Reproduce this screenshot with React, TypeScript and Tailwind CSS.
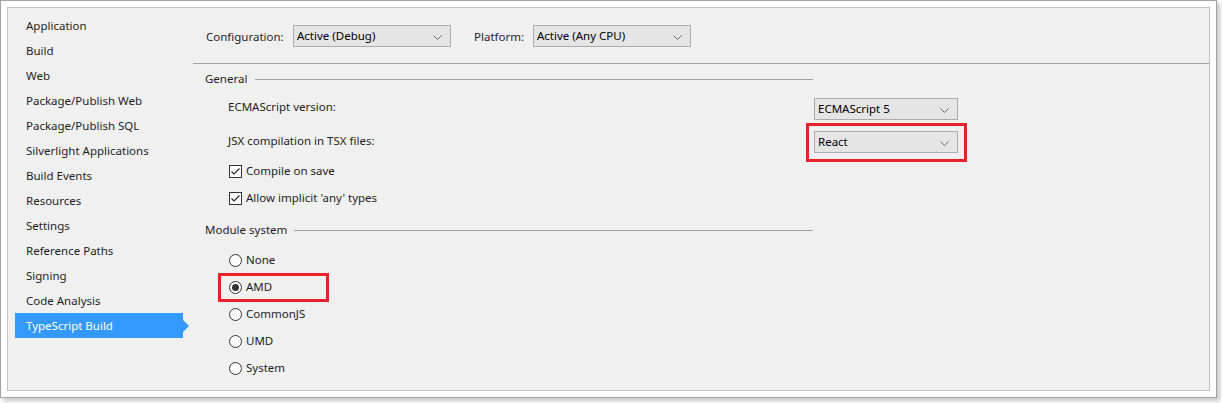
import React from "react";

const sideItems = [
  "Application",
  "Build",
  "Web",
  "Package/Publish Web",
  "Package/Publish SQL",
  "Silverlight Applications",
  "Build Events",
  "Resources",
  "Settings",
  "Reference Paths",
  "Signing",
  "Code Analysis",
  "TypeScript Build",
];

function Chevron() {
  return (
    <svg width="9" height="5" viewBox="0 0 9 5" className="absolute right-[8px] top-[9px]">
      <path d="M0.5 0.5 L4.5 4.5 L8.5 0.5" stroke="#6d6d6d" strokeWidth="1" fill="none" />
    </svg>
  );
}

function Combo({ value, className }: { value: string; className: string }) {
  return (
    <div
      className={
        "relative flex h-[22px] items-center border border-[#acacac] bg-[#e5e5e5] pl-[3px] text-black " +
        className
      }
    >
      <span className="leading-[16px]">{value}</span>
      <Chevron />
    </div>
  );
}

function Checkbox() {
  return (
    <div className="flex h-[13px] w-[13px] items-center justify-center border border-[#333333] bg-white">
      <svg width="11" height="11" viewBox="0 0 11 11">
        <path d="M1.5 5.5 L4 8 L9.5 2.5" stroke="#222" strokeWidth="1.2" fill="none" />
      </svg>
    </div>
  );
}

function Radio({ checked }: { checked?: boolean }) {
  return (
    <div className="flex h-[13px] w-[13px] items-center justify-center rounded-full border border-[#333333] bg-white">
      {checked && <div className="h-[7px] w-[7px] rounded-full bg-[#333333]" />}
    </div>
  );
}

export default function App() {
  const radios = ["None", "AMD", "CommonJS", "UMD", "System"];
  return (
    <div className="h-[403px] w-[1222px] bg-white font-['Noto_Sans',sans-serif] text-[11.5px] text-[#1e1e1e]">
      <div className="h-[398px] w-[1217px] border border-[#a3a3a3] bg-white p-[6px] shadow-[3px_3px_4px_rgba(0,0,0,0.22)]">
        <div className="flex h-full border border-[#c2c2c2] bg-[#f0f0f0]">
          {/* Sidebar */}
          <div className="flex w-[185px] shrink-0 flex-col pl-[7px] pt-[5px]">
            {sideItems.map((s) => {
              const sel = s === "TypeScript Build";
              return (
                <div key={s} className="flex h-[25px] items-center">
                  <div
                    className={
                      sel
                        ? "flex h-[25px] w-[168px] items-center bg-[#3399ff] pl-[11px] text-white"
                        : "flex h-[25px] w-[168px] items-center pl-[11px]"
                    }
                  >
                    {s}
                  </div>
                  {sel && (
                    <div className="h-0 w-0 border-y-[6px] border-l-[6px] border-y-transparent border-l-[#3399ff]" />
                  )}
                </div>
              );
            })}
          </div>

          {/* Main */}
          <div className="flex flex-1 flex-col">
            <div className="flex items-center pl-[13px] pt-[17px]">
              <div className="w-[87px] pt-[1px]">Configuration:</div>
              <Combo value="Active (Debug)" className="w-[158px]" />
              <div className="ml-[23px] w-[59px] pt-[1px]">Platform:</div>
              <Combo value="Active (Any CPU)" className="w-[158px]" />
            </div>

            <div className="mt-[16px] h-px bg-[#a0a0a0]" />

            <div className="mt-[7px] flex h-[16px] w-[620px] items-center pl-[12px]">
              <span className="leading-[16px]">General</span>
              <div className="ml-[8px] h-px flex-1 bg-[#a0a0a0]" />
            </div>

            <div className="mt-[11px] flex h-[22px] items-start pl-[35px]">
              <div className="mt-[1px] w-[586px] leading-[16px]">ECMAScript version:</div>
              <Combo value="ECMAScript 5" className="w-[144px]" />
            </div>

            <div className="mt-[11px] flex h-[22px] items-start pl-[35px]">
              <div className="mt-[2px] w-[586px] leading-[16px]">JSX compilation in TSX files:</div>
              <div className="relative">
                <Combo value="React" className="w-[144px]" />
                <div className="absolute left-[-8px] top-[-8px] h-[39px] w-[161px] border-[3px] border-[#e8202a]" />
              </div>
            </div>

            <div className="mt-[10px] flex h-[16px] items-center gap-[4px] pl-[36px]">
              <Checkbox />
              <span className="leading-[16px]">Compile on save</span>
            </div>
            <div className="mt-[11px] flex h-[16px] items-center gap-[4px] pl-[36px]">
              <Checkbox />
              <span className="leading-[16px]">Allow implicit 'any' types</span>
            </div>

            <div className="mt-[16px] flex h-[16px] w-[620px] items-center pl-[12px]">
              <span className="leading-[16px]">Module system</span>
              <div className="ml-[7px] h-px flex-1 bg-[#a0a0a0]" />
            </div>

            {radios.map((r, i) => (
              <div
                key={r}
                className={
                  (i === 0 ? "mt-[14px] " : "mt-[11px] ") +
                  "relative flex h-[16px] items-center gap-[4px] pl-[36px]"
                }
              >
                <Radio checked={r === "AMD"} />
                <span className="leading-[16px]">{r}</span>
                {r === "AMD" && (
                  <div className="absolute left-[25px] top-[-6px] h-[29px] w-[111px] border-[3px] border-[#e8202a]" />
                )}
              </div>
            ))}
          </div>
        </div>
      </div>
    </div>
  );
}
